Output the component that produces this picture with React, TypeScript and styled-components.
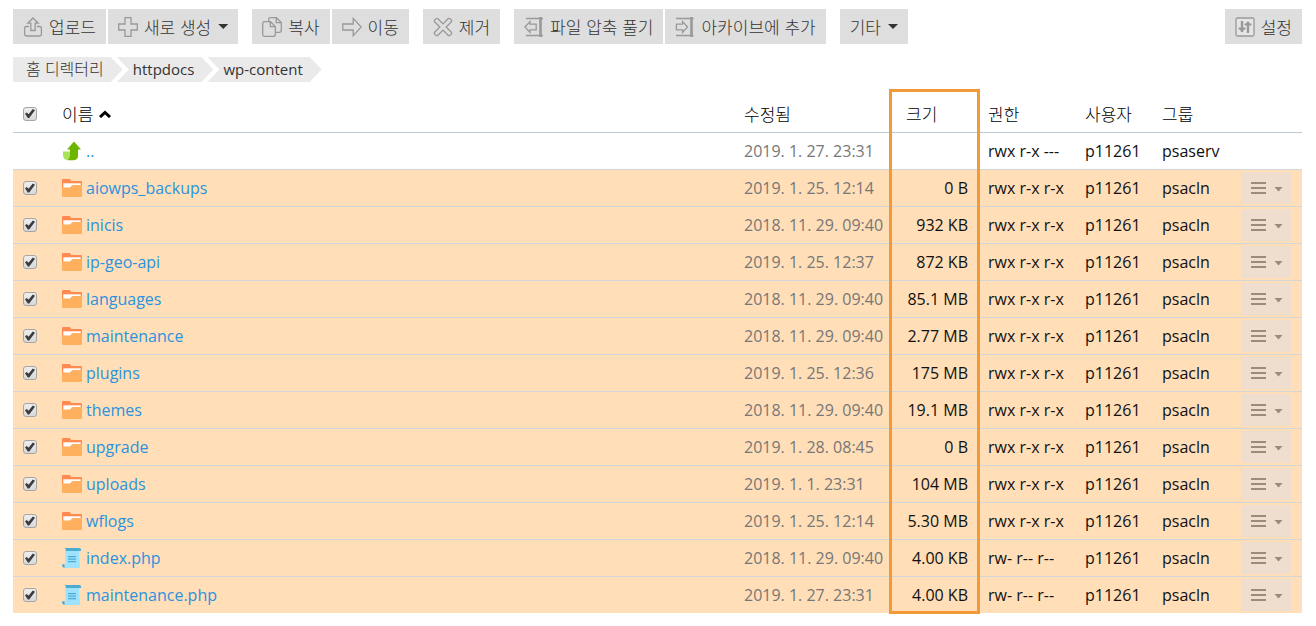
import React from 'react';
import styled, { createGlobalStyle } from 'styled-components';

const GlobalStyle = createGlobalStyle`
  *, *::before, *::after { box-sizing: border-box; }
  body {
    margin: 0;
    background: #fff;
    color: #111;
    font-family: "Open Sans", "Noto Sans CJK KR", sans-serif;
    font-size: 16px;
    line-height: 24px;
  }
`;

const Page = styled.main`
  padding: 9px 14px 12px 13px;
`;

const Toolbar = styled.div`
  display: flex;
  gap: 14px;
`;

const ButtonGroup = styled.div<{ $end?: boolean }>`
  display: flex;
  gap: 2px;
  margin-left: ${(p) => (p.$end ? 'auto' : '0')};
`;

const ToolButton = styled.button`
  display: flex;
  align-items: center;
  gap: 6px;
  height: 35px;
  padding: 0 10px;
  border: 0;
  background: #dedede;
  color: #333;
  font-family: "Noto Sans CJK KR", sans-serif;
  font-weight: 300;
  font-size: 17px;
  line-height: 24px;
  white-space: nowrap;
  cursor: pointer;
`;

const Caret = styled.span`
  width: 10px;
  height: 5px;
  background: currentColor;
  clip-path: polygon(0 0, 100% 0, 50% 100%);
`;

const ToolCaret = styled(Caret)`
  margin-left: 1px;
`;

const Crumbs = styled.ol`
  display: flex;
  margin: 13px 0 15px;
  padding: 0;
  list-style: none;
`;

const Crumb = styled.li<{ $first?: boolean }>`
  height: 25px;
  padding: 0 19px 0 ${(p) => (p.$first ? '13px' : '16px')};
  margin-left: ${(p) => (p.$first ? '0' : '-6px')};
  background: #eaeaea;
  clip-path: ${(p) =>
    p.$first
      ? 'polygon(0 0, calc(100% - 12px) 0, 100% 50%, calc(100% - 12px) 100%, 0 100%)'
      : 'polygon(0 0, calc(100% - 12px) 0, 100% 50%, calc(100% - 12px) 100%, 0 100%, 12px 50%)'};
`;

const CrumbLink = styled.a<{ $korean?: boolean }>`
  display: block;
  color: #333;
  font-size: ${(p) => (p.$korean ? '16px' : '15px')};
  font-weight: ${(p) => (p.$korean ? 300 : 400)};
  line-height: 25px;
  text-decoration: none;
  white-space: nowrap;
`;

const TableArea = styled.div`
  position: relative;
`;

const Table = styled.table`
  width: 100%;
  table-layout: fixed;
  border-collapse: separate;
  border-spacing: 0;
`;

const Col = styled.col<{ $w?: number }>`
  width: ${(p) => (p.$w ? `${p.$w}px` : 'auto')};
`;

const HeadCell = styled.th`
  height: 36px;
  padding: 0 10px 2px;
  border-bottom: 1px solid #bfc9d2;
  color: #000;
  font-family: "Noto Sans CJK KR", sans-serif;
  font-size: 17px;
  font-weight: 300;
  text-align: left;
  white-space: nowrap;
`;

const SortButton = styled.button`
  display: flex;
  align-items: center;
  gap: 6px;
  padding: 0;
  border: 0;
  background: none;
  color: inherit;
  font: inherit;
  line-height: 24px;
`;

const Row = styled.tr<{ $selected?: boolean }>`
  background: ${(p) => (p.$selected ? '#ffdeb8' : '#fff')};
  &:last-child td { border-bottom: 0; height: 36px; }
`;

const Cell = styled.td<{ $muted?: boolean; $right?: boolean }>`
  height: 37px;
  padding: 0 10px;
  border-bottom: 1px solid #d3d6d8;
  color: ${(p) => (p.$muted ? '#777' : '#111')};
  text-align: ${(p) => (p.$right ? 'right' : 'left')};
  white-space: nowrap;
`;

const FileLink = styled.a`
  display: flex;
  align-items: center;
  gap: 4px;
  color: #2a93df;
  text-decoration: none;
`;

const Check = styled.input`
  appearance: none;
  display: block;
  width: 14px;
  height: 14px;
  margin: 0;
  border: 1px solid #a5a5a5;
  border-radius: 3px;
  background: linear-gradient(#eee, #d9d9d9);
  &:checked::before {
    content: '';
    display: block;
    width: 10px;
    height: 10px;
    margin: 1px;
    background: #3c3c3c;
    clip-path: polygon(0 53%, 18% 40%, 36% 58%, 78% 4%, 100% 18%, 42% 96%, 28% 96%);
  }
`;

const MenuButton = styled.button`
  display: flex;
  align-items: center;
  gap: 8px;
  width: 50px;
  height: 32px;
  padding: 0 8px 0 10px;
  border: 0;
  background: #efdecd;
  color: #9a8b7b;
  cursor: pointer;
`;

const Bars = styled.span`
  width: 15px;
  height: 12px;
  border: solid currentColor;
  border-width: 2px 0;
  background: linear-gradient(currentColor, currentColor) center / 15px 2px no-repeat;
`;

const MenuCaret = styled(Caret)`
  width: 9px;
  margin-top: 2px;
`;

const Highlight = styled.div`
  position: absolute;
  top: -8px;
  bottom: -1px;
  right: 322px;
  width: 91px;
  border: 3px solid #f29a38;
  pointer-events: none;
`;

const Glyph = styled.svg`
  display: block;
  flex: none;
  fill: none;
  stroke: #999;
  stroke-width: 1.3;
`;

const Picture = styled.svg`
  display: block;
  flex: none;
`;

const SortMark = styled.svg`
  display: block;
  fill: none;
  stroke: #000;
  stroke-width: 3;
`;

const Icon = ({ children }: { children: React.ReactNode }) => (
  <Glyph width="20" height="20" viewBox="0 0 20 20" aria-hidden="true">{children}</Glyph>
);

const UploadIcon = () => (
  <Icon>
    <path d="M6 9.5H3.4Q1.6 9.5 1.6 11.3V17.2Q1.6 19 3.4 19H16.6Q18.4 19 18.4 17.2V11.3Q18.4 9.5 16.6 9.5H14" />
    <path d="M10 1L15.2 6.2H12.2V13.5H7.8V6.2H4.8Z" />
  </Icon>
);
const PlusIcon = () => (
  <Icon><path d="M7 .7H13V7H19.3V13H13V19.3H7V13H.7V7H7Z" /></Icon>
);
const CopyIcon = () => (
  <Icon>
    <path d="M2.5 4.7H8.5L13.3 9.5V17.3Q13.3 19.3 11.3 19.3H2.7Q.7 19.3 .7 17.3V6.5Q.7 4.7 2.5 4.7Z" />
    <path d="M8.3 4.7V9.7H13.3" />
    <path d="M6.7 4.7V2.5Q6.7 .7 8.5 .7H14.5L19.3 5.5V13.3Q19.3 15.3 17.3 15.3H13.3M14.2 .7V5.7H19.3" />
  </Icon>
);
const MoveIcon = () => (
  <Icon><path d="M.8 7H11.2V1.4L19.2 10L11.2 18.6V13H.8Z" /></Icon>
);
const RemoveIcon = () => (
  <Icon>
    <path
      transform="rotate(45 10 10)"
      d="M7.8 7.8V1Q7.8-.8 9-.8H11Q12.2-.8 12.2 1V7.8H19Q20.8 7.8 20.8 9V11Q20.8 12.2 19 12.2H12.2V19Q12.2 20.8 11 20.8H9Q7.8 20.8 7.8 19V12.2H1Q-.8 12.2-.8 11V9Q-.8 7.8 1 7.8Z"
    />
  </Icon>
);
const ExtractIcon = () => (
  <Icon>
    <path d="M2 1.5H19M2 18.5H19" />
    <path d="M16.5 0V20" strokeWidth="2.6" />
    <path d="M1 10L6 4.6V7.2H12.2V12.8H6V15.4Z" />
  </Icon>
);
const ArchiveIcon = () => (
  <Icon>
    <path d="M1 1.5H18.5M1 18.5H18.5" />
    <path d="M16.5 0V20" strokeWidth="2.6" />
    <path d="M12.6 10L7.6 4.6V7.2H1.4V12.8H7.6V15.4Z" />
  </Icon>
);
const SettingsIcon = () => (
  <Icon>
    <rect x="1" y="1" width="18" height="18" rx="1.5" fill="#e6e6e6" />
    <path d="M7 4V15M13 16V5" strokeWidth="2.4" />
    <path d="M3.5 11.5H10.5M9.5 7.5H16.5" strokeWidth="2" />
    <path d="M4.5 12L7 15.5L9.5 12ZM10.5 7.5L13 4L15.5 7.5Z" fill="#999" stroke="none" />
  </Icon>
);

const FolderIcon = () => (
  <Picture width="20" height="18" viewBox="0 0 20 18" aria-hidden="true">
    <path d="M0 1Q0 0 1 0H7.2Q8 0 8.5.8L9.2 2H19Q20 2 20 3V9H0Z" fill="#ff8a50" />
    <path d="M1.3 4.3H18.7V9H1.3Z" fill="#fff" />
    <path d="M0 8.6H7.4Q8.3 8.6 9 7.6L9.8 6.6Q10.4 5.9 11.2 5.9H20V17Q20 18 19 18H1Q0 18 0 17Z" fill="#ffb05f" />
  </Picture>
);
const ScriptIcon = () => (
  <Picture width="20" height="20" viewBox="0 0 20 20" aria-hidden="true">
    <path d="M3.5 2.2Q3.5 0 2.5 0H15.5Q17 .8 17 3L18 20H2.2Q3.5 19 3.5 17Z" fill="#9fe2fc" />
    <path d="M3 0H17.5Q19 0 19 1.6V3H4Q4 1 3 0Z" fill="#4bacd3" />
    <path d="M0 16.2H2.7V19.7Q0 20 0 16.2Z" fill="#4bacd3" />
    <path d="M6 8.7H14M6 11.2H14M6 13.7H14" stroke="#4bacd3" strokeWidth="1.2" />
  </Picture>
);
const ParentIcon = () => (
  <Picture width="20" height="20" viewBox="0 0 20 20" aria-hidden="true">
    <path d="M1 10.5H8V19H6Q1 19 1 14Z" fill="#a9e25b" />
    <path d="M12 .5L19 8.5H16V14.5Q16 19.2 11 19.2H5.5Q8 17.5 8 14V8.5H5Z" fill="#6db600" />
  </Picture>
);

type Entry = {
  name: string;
  kind: 'parent' | 'folder' | 'script';
  modified: string;
  size: string;
  perms: string;
  group: string;
};

const folder = (name: string, modified: string, size: string): Entry => ({
  name, kind: 'folder', modified, size, perms: 'rwx r-x r-x', group: 'psacln',
});
const script = (name: string, modified: string, size: string): Entry => ({
  name, kind: 'script', modified, size, perms: 'rw- r-- r--', group: 'psacln',
});

const entries: Entry[] = [
  { name: '..', kind: 'parent', modified: '2019. 1. 27. 23:31', size: '', perms: 'rwx r-x ---', group: 'psaserv' },
  folder('aiowps_backups', '2019. 1. 25. 12:14', '0 B'),
  folder('inicis', '2018. 11. 29. 09:40', '932 KB'),
  folder('ip-geo-api', '2019. 1. 25. 12:37', '872 KB'),
  folder('languages', '2018. 11. 29. 09:40', '85.1 MB'),
  folder('maintenance', '2018. 11. 29. 09:40', '2.77 MB'),
  folder('plugins', '2019. 1. 25. 12:36', '175 MB'),
  folder('themes', '2018. 11. 29. 09:40', '19.1 MB'),
  folder('upgrade', '2019. 1. 28. 08:45', '0 B'),
  folder('uploads', '2019. 1. 1. 23:31', '104 MB'),
  folder('wflogs', '2019. 1. 25. 12:14', '5.30 MB'),
  script('index.php', '2018. 11. 29. 09:40', '4.00 KB'),
  script('maintenance.php', '2019. 1. 27. 23:31', '4.00 KB'),
];

const icons = { parent: ParentIcon, folder: FolderIcon, script: ScriptIcon };

const FileRow = ({ entry }: { entry: Entry }) => {
  const selectable = entry.kind !== 'parent';
  const KindIcon = icons[entry.kind];
  return (
    <Row $selected={selectable}>
      <Cell>{selectable && <Check type="checkbox" defaultChecked aria-label={entry.name} />}</Cell>
      <Cell><FileLink href="#"><KindIcon />{entry.name}</FileLink></Cell>
      <Cell $muted>{entry.modified}</Cell>
      <Cell $right>{entry.size}</Cell>
      <Cell>{entry.perms}</Cell>
      <Cell>p11261</Cell>
      <Cell>{entry.group}</Cell>
      <Cell>
        {selectable && (
          <MenuButton type="button" aria-label={entry.name}><Bars /><MenuCaret /></MenuButton>
        )}
      </Cell>
    </Row>
  );
};

export default function App() {
  return (
    <Page lang="ko">
      <GlobalStyle />
      <Toolbar>
        <ButtonGroup>
          <ToolButton type="button"><UploadIcon />업로드</ToolButton>
          <ToolButton type="button"><PlusIcon />새로 생성<ToolCaret /></ToolButton>
        </ButtonGroup>
        <ButtonGroup>
          <ToolButton type="button"><CopyIcon />복사</ToolButton>
          <ToolButton type="button"><MoveIcon />이동</ToolButton>
        </ButtonGroup>
        <ButtonGroup>
          <ToolButton type="button"><RemoveIcon />제거</ToolButton>
        </ButtonGroup>
        <ButtonGroup>
          <ToolButton type="button"><ExtractIcon />파일 압축 풀기</ToolButton>
          <ToolButton type="button"><ArchiveIcon />아카이브에 추가</ToolButton>
        </ButtonGroup>
        <ButtonGroup>
          <ToolButton type="button">기타<ToolCaret /></ToolButton>
        </ButtonGroup>
        <ButtonGroup $end>
          <ToolButton type="button"><SettingsIcon />설정</ToolButton>
        </ButtonGroup>
      </Toolbar>
      <nav>
        <Crumbs>
          <Crumb $first><CrumbLink $korean href="#">홈 디렉터리</CrumbLink></Crumb>
          <Crumb><CrumbLink href="#">httpdocs</CrumbLink></Crumb>
          <Crumb><CrumbLink href="#">wp-content</CrumbLink></Crumb>
        </Crumbs>
      </nav>
      <TableArea>
        <Table>
          <colgroup>
            <Col $w={39} />
            <Col />
            <Col $w={162} />
            <Col $w={82} />
            <Col $w={97} />
            <Col $w={77} />
            <Col $w={79} />
            <Col $w={71} />
          </colgroup>
          <thead>
            <tr>
              <HeadCell><Check type="checkbox" defaultChecked aria-label="이름" /></HeadCell>
              <HeadCell>
                <SortButton type="button">
                  이름
                  <SortMark width="12" height="8" viewBox="0 0 12 8" aria-hidden="true">
                    <path d="M1 7L6 2.5L11 7" />
                  </SortMark>
                </SortButton>
              </HeadCell>
              <HeadCell>수정됨</HeadCell>
              <HeadCell>크기</HeadCell>
              <HeadCell>권한</HeadCell>
              <HeadCell>사용자</HeadCell>
              <HeadCell>그룹</HeadCell>
              <HeadCell />
            </tr>
          </thead>
          <tbody>
            {entries.map((entry) => <FileRow key={entry.name} entry={entry} />)}
          </tbody>
        </Table>
        <Highlight />
      </TableArea>
    </Page>
  );
}
